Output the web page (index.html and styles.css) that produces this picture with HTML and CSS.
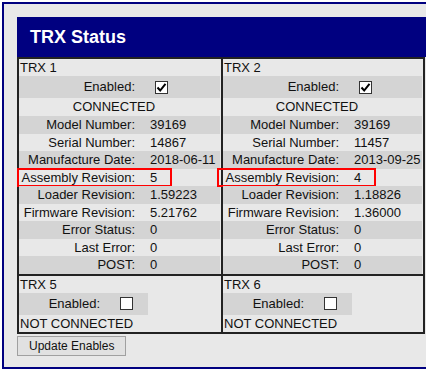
FILE: index.html
```html
<!DOCTYPE html>
<html lang="en">
<head>
    <meta charset="UTF-8">
    <meta name="viewport" content="width=device-width, initial-scale=1.0">
    <title>TRX Status</title>
    <link rel="stylesheet" href="styles.css">
</head>
<body>
    <div class="panel">
        <div class="panel-head">TRX Status</div>

        <div class="trx-grid">
            <!-- TRX 1 -->
            <div class="trx">
                <div class="trx-name">TRX 1</div>
                <div class="info">
                    <div class="row enable shade">
                        <span class="lbl">Enabled:</span>
                        <span class="val"><span class="box"><svg width="11" height="11" viewBox="0 0 11 11"><polyline points="1.5,5.5 4.2,8.5 9.5,1.8" fill="none" stroke="#000" stroke-width="2"/></svg></span></span>
                    </div>
                    <div class="row state">CONNECTED</div>
                    <div class="row shade"><span class="lbl">Model Number:</span><span class="val">39169</span></div>
                    <div class="row"><span class="lbl">Serial Number:</span><span class="val">14867</span></div>
                    <div class="row shade"><span class="lbl">Manufacture Date:</span><span class="val">2018-06-11</span></div>
                    <div class="row"><span class="lbl">Assembly Revision:</span><span class="val">5</span><span class="mark mark-left"></span></div>
                    <div class="row shade"><span class="lbl">Loader Revision:</span><span class="val">1.59223</span></div>
                    <div class="row"><span class="lbl">Firmware Revision:</span><span class="val">5.21762</span></div>
                    <div class="row shade"><span class="lbl">Error Status:</span><span class="val">0</span></div>
                    <div class="row"><span class="lbl">Last Error:</span><span class="val">0</span></div>
                    <div class="row shade"><span class="lbl">POST:</span><span class="val">0</span></div>
                </div>
            </div>

            <!-- TRX 2 -->
            <div class="trx">
                <div class="trx-name">TRX 2</div>
                <div class="info">
                    <div class="row enable shade">
                        <span class="lbl">Enabled:</span>
                        <span class="val"><span class="box"><svg width="11" height="11" viewBox="0 0 11 11"><polyline points="1.5,5.5 4.2,8.5 9.5,1.8" fill="none" stroke="#000" stroke-width="2"/></svg></span></span>
                    </div>
                    <div class="row state">CONNECTED</div>
                    <div class="row shade"><span class="lbl">Model Number:</span><span class="val">39169</span></div>
                    <div class="row"><span class="lbl">Serial Number:</span><span class="val">11457</span></div>
                    <div class="row shade"><span class="lbl">Manufacture Date:</span><span class="val">2013-09-25</span></div>
                    <div class="row"><span class="lbl">Assembly Revision:</span><span class="val">4</span><span class="mark mark-right"></span></div>
                    <div class="row shade"><span class="lbl">Loader Revision:</span><span class="val">1.18826</span></div>
                    <div class="row"><span class="lbl">Firmware Revision:</span><span class="val">1.36000</span></div>
                    <div class="row shade"><span class="lbl">Error Status:</span><span class="val">0</span></div>
                    <div class="row"><span class="lbl">Last Error:</span><span class="val">0</span></div>
                    <div class="row shade"><span class="lbl">POST:</span><span class="val">0</span></div>
                </div>
            </div>

            <!-- TRX 5 -->
            <div class="trx">
                <div class="trx-name">TRX 5</div>
                <div class="info small">
                    <div class="row enable shade">
                        <span class="lbl">Enabled:</span>
                        <span class="val"><span class="box"></span></span>
                    </div>
                </div>
                <div class="trx-state">NOT CONNECTED</div>
            </div>

            <!-- TRX 6 -->
            <div class="trx">
                <div class="trx-name">TRX 6</div>
                <div class="info small">
                    <div class="row enable shade">
                        <span class="lbl">Enabled:</span>
                        <span class="val"><span class="box"></span></span>
                    </div>
                </div>
                <div class="trx-state">NOT CONNECTED</div>
            </div>
        </div>

        <button class="update">Update Enables</button>
    </div>
</body>
</html>
```

FILE: styles.css
```css
html, body {
    margin: 0;
    padding: 0;
    background: #fff;
}

body {
    font-family: "Liberation Sans", Arial, sans-serif;
    font-size: 13px;
    color: #111;
}

.panel {
    margin: 2px 0 0 2px;
    padding: 13px 0 11px 13px;
    border: 2px solid #000080;
    border-right: none;
    background: #e8e8e8;
}

.panel-head {
    height: 40px;
    padding-left: 13px;
    display: flex;
    align-items: center;
    background: #000080;
    color: #fff;
    font-size: 18px;
    font-weight: bold;
}

.trx-grid {
    width: 406px;
    display: grid;
    grid-template-columns: 204px 202px;
    border: 1px solid #222;
}

.trx {
    border: 1px solid #222;
    background: #e8e8e8;
}

.trx-name,
.trx-state {
    height: 17px;
    line-height: 17px;
    padding-left: 1px;
    white-space: nowrap;
}

.info {
    margin-right: 1px;
}

.info.small {
    width: 129px;
}

.row {
    position: relative;
    display: grid;
    grid-template-columns: 121px 1fr;
    height: 17.5px;
    line-height: 17.5px;
    white-space: nowrap;
}

.row.shade {
    background: #d4d4d4;
}

.row.enable {
    height: 22px;
    align-items: center;
}

.info.small .row {
    grid-template-columns: 86px 1fr;
}

.row.state {
    display: block;
    height: 18px;
    line-height: 18px;
    padding-right: 11px;
    text-align: center;
}

.lbl {
    text-align: right;
    padding-right: 5px;
}

.val {
    padding-left: 10px;
    display: flex;
    align-items: center;
}

.box {
    width: 11px;
    height: 11px;
    margin-left: 5px;
    border: 1px solid #333;
    background: #fff;
    display: flex;
}

/* red annotation boxes drawn over the revision rows */
.mark {
    position: absolute;
    top: -1px;
    height: 15px;
    border: 2px solid #f00;
}

.mark-left {
    left: -2px;
    width: 151px;
}

.mark-right {
    left: -6px;
    width: 155px;
}

.update {
    margin-top: 2px;
    height: 20px;
    padding: 0 11px;
    font-family: "Liberation Sans", Arial, sans-serif;
    font-size: 12px;
    color: #111;
    background: #e1e1e1;
    border: 1px solid #a0a0a0;
    border-radius: 0;
}
```
